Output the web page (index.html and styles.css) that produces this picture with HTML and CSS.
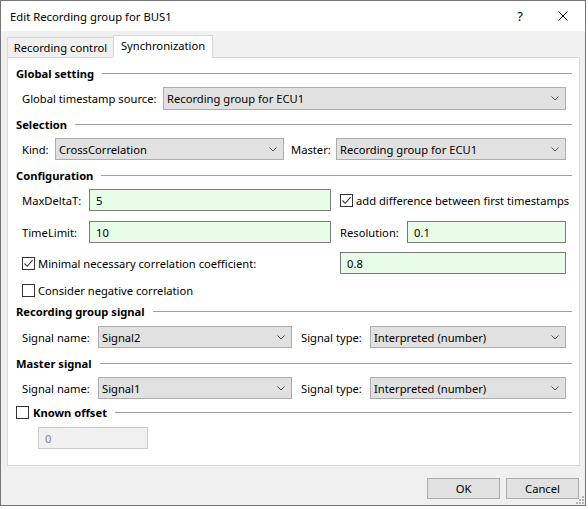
FILE: index.html
```html
<!DOCTYPE html>
<html>
<head>
<meta charset="utf-8">
<title>Edit Recording group for BUS1</title>
<link rel="stylesheet" href="styles.css">
</head>
<body>
<div class="window">
  <div class="titlebar">
    <span class="title">Edit Recording group for BUS1</span>
    <span class="help">?</span>
    <svg class="close" width="10" height="10" viewBox="0 0 10 10"><path d="M0.5 0.5 L9.5 9.5 M9.5 0.5 L0.5 9.5" stroke="#000" stroke-width="1" fill="none"/></svg>
  </div>
  <div class="client">
    <div class="tabs">
      <div class="tab">Recording control</div>
      <div class="tab active">Synchronization</div>
    </div>
    <div class="pane">
      <div class="hdr m7"><span class="hdr-text">Global setting</span><span class="rule"></span></div>
      <div class="row tall m6">
        <span class="lbl">Global timestamp source:</span>
        <div class="combo w-global"><span class="val">Recording group for ECU1</span><svg class="chev" width="8" height="5" viewBox="0 0 8 5"><path d="M0.5 0.5 L4 4 L7.5 0.5" stroke="#505050" fill="none"/></svg></div>
      </div>

      <div class="hdr m6"><span class="hdr-text">Selection</span><span class="rule"></span></div>
      <div class="row m6">
        <span class="lbl w-kind">Kind:</span>
        <div class="combo w-kindcombo"><span class="val">CrossCorrelation</span><svg class="chev" width="8" height="5" viewBox="0 0 8 5"><path d="M0.5 0.5 L4 4 L7.5 0.5" stroke="#505050" fill="none"/></svg></div>
        <span class="lbl w-master">Master:</span>
        <div class="combo grow"><span class="val">Recording group for ECU1</span><svg class="chev" width="8" height="5" viewBox="0 0 8 5"><path d="M0.5 0.5 L4 4 L7.5 0.5" stroke="#505050" fill="none"/></svg></div>
      </div>

      <div class="hdr m7"><span class="hdr-text">Configuration</span><span class="rule"></span></div>
      <div class="row m6">
        <span class="lbl w-cfg">MaxDeltaT:</span>
        <div class="edit w-cfgedit">5</div>
        <span class="cb checked gap9"><svg width="11" height="11" viewBox="0 0 11 11"><path d="M1.5 5.5 L4.2 8.3 L9.6 2.2" stroke="#333" stroke-width="1.1" fill="none"/></svg></span>
        <span class="cblbl">add difference between first timestamps</span>
      </div>
      <div class="row m10">
        <span class="lbl w-cfg">TimeLimit:</span>
        <div class="edit w-cfgedit">10</div>
        <span class="lbl w-res">Resolution:</span>
        <div class="edit grow">0.1</div>
      </div>
      <div class="row m9">
        <div class="leftpart">
          <span class="cb checked"><svg width="11" height="11" viewBox="0 0 11 11"><path d="M1.5 5.5 L4.2 8.3 L9.6 2.2" stroke="#333" stroke-width="1.1" fill="none"/></svg></span>
          <span class="cblbl">Minimal necessary correlation coefficient:</span>
        </div>
        <div class="edit grow">0.8</div>
      </div>
      <div class="row short m8">
        <span class="cb"></span>
        <span class="cblbl">Consider negative correlation</span>
      </div>

      <div class="hdr m5"><span class="hdr-text">Recording group signal</span><span class="rule"></span></div>
      <div class="row m7">
        <span class="lbl w-sname">Signal name:</span>
        <div class="combo w-scombo"><span class="val">Signal2</span><svg class="chev" width="8" height="5" viewBox="0 0 8 5"><path d="M0.5 0.5 L4 4 L7.5 0.5" stroke="#505050" fill="none"/></svg></div>
        <span class="lbl w-stype">Signal type:</span>
        <div class="combo grow"><span class="val">Interpreted (number)</span><svg class="chev" width="8" height="5" viewBox="0 0 8 5"><path d="M0.5 0.5 L4 4 L7.5 0.5" stroke="#505050" fill="none"/></svg></div>
      </div>

      <div class="hdr m7"><span class="hdr-text">Master signal</span><span class="rule"></span></div>
      <div class="row m6">
        <span class="lbl w-sname">Signal name:</span>
        <div class="combo w-scombo"><span class="val">Signal1</span><svg class="chev" width="8" height="5" viewBox="0 0 8 5"><path d="M0.5 0.5 L4 4 L7.5 0.5" stroke="#505050" fill="none"/></svg></div>
        <span class="lbl w-stype">Signal type:</span>
        <div class="combo grow"><span class="val">Interpreted (number)</span><svg class="chev" width="8" height="5" viewBox="0 0 8 5"><path d="M0.5 0.5 L4 4 L7.5 0.5" stroke="#505050" fill="none"/></svg></div>
      </div>

      <div class="hdr m5"><span class="cb hdr-cb"></span><span class="hdr-text">Known offset</span><span class="rule"></span></div>
      <div class="row m7 indent">
        <div class="edit disabled w-offset">0</div>
      </div>
    </div>
    <div class="buttons">
      <div class="btn">OK</div>
      <div class="btn">Cancel</div>
    </div>
  </div>
  <svg class="grip" width="10" height="8" viewBox="0 0 10 8">
    <rect x="8" y="0" width="2" height="2" fill="#b4b4b4"/>
    <rect x="5" y="3" width="2" height="2" fill="#b4b4b4"/>
    <rect x="8" y="3" width="2" height="2" fill="#b4b4b4"/>
    <rect x="2" y="6" width="2" height="2" fill="#b4b4b4"/>
    <rect x="5" y="6" width="2" height="2" fill="#b4b4b4"/>
    <rect x="8" y="6" width="2" height="2" fill="#b4b4b4"/>
  </svg>
</div>
</body>
</html>
```

FILE: styles.css
```css
* { box-sizing: border-box; }
html, body { margin: 0; padding: 0; background: #ffffff; }
body {
  width: 588px;
  height: 509px;
  overflow: hidden;
  font-family: "Noto Sans", "Open Sans", sans-serif;
  font-size: 11.2px;
  color: #000;
}
.window {
  position: relative;
  width: 586px;
  height: 506px;
  border: 1px solid #767676;
  background: #f0f0f0;
  display: flex;
  flex-direction: column;
}
.titlebar {
  flex: none;
  height: 30px;
  background: #ffffff;
  display: flex;
  align-items: center;
  padding-left: 9px;
}
.title { font-size: 11.3px; white-space: nowrap; }
.help {
  margin-left: auto;
  width: 8px;
  text-align: center;
  font-size: 13px;
}
.close { margin-left: 34px; margin-right: 17px; flex: none; }

.client {
  flex: 1;
  display: flex;
  flex-direction: column;
  padding: 4px 5px 0 6px;
}
.tabs {
  flex: none;
  height: 22px;
  display: flex;
  align-items: flex-end;
}
.tab {
  height: 20px;
  width: 106px;
  border: 1px solid #d9d9d9;
  border-right: none;
  border-bottom: none;
  background: #f0f0f0;
  text-align: center;
  line-height: 19px;
  white-space: nowrap;
}
.tab.active {
  position: relative;
  z-index: 1;
  height: 23px;
  width: 100px;
  margin-bottom: -1px;
  background: #ffffff;
  border-right: 1px solid #d9d9d9;
  line-height: 20px;
}
.pane {
  flex: none;
  height: 409px;
  background: #ffffff;
  border: 1px solid #d9d9d9;
  padding: 0 7px 0 8px;
}
.hdr {
  height: 16px;
  display: flex;
  align-items: center;
  font-weight: bold;
  white-space: nowrap;
}
.rule { flex: 1; height: 1px; background: #a0a0a0; margin-left: 8px; }
.hdr-cb { margin-right: 4px; }

.m5 { margin-top: 5px; }
.m6 { margin-top: 6px; }
.m7 { margin-top: 7px; }
.m8 { margin-top: 8px; }
.m9 { margin-top: 9px; }
.m10 { margin-top: 10px; }

.row {
  height: 22px;
  display: flex;
  align-items: center;
  padding: 0 6px;
  white-space: nowrap;
}
.row.tall { height: 23px; }
.row.short { height: 16px; }
.row.indent { padding-left: 22px; }

.lbl { flex: none; white-space: nowrap; }
.w-kind { width: 33px; }
.w-master { width: 45px; margin-left: 7px; }
.w-cfg { width: 67px; }
.w-res { width: 67px; margin-left: 9px; }
.w-sname { width: 76px; }
.w-stype { width: 69px; margin-left: 9px; }

.combo {
  height: 100%;
  border: 1px solid #adadad;
  background: #e1e1e1;
  display: flex;
  align-items: center;
  padding: 0 6px 0 3px;
  flex: none;
}
.combo .val { flex: 1; overflow: hidden; }
.chev { flex: none; }
.grow { flex: 1; }
.w-global { width: 403px; margin-left: auto; }
.w-kindcombo { width: 229px; }
.w-scombo { width: 194px; }

.edit {
  height: 100%;
  border: 1px solid #7a7a7a;
  background: #e7fde7;
  padding-left: 6px;
  display: flex;
  align-items: center;
  flex: none;
}
.edit.grow { flex: 1; }
.w-cfgedit { width: 242px; }
.edit.disabled {
  background: #f0f0f0;
  border-color: #cccccc;
  color: #838383;
}
.w-offset { width: 110px; }

.cb {
  flex: none;
  width: 13px;
  height: 13px;
  border: 1px solid #333333;
  background: #ffffff;
  display: flex;
  align-items: center;
  justify-content: center;
}
.gap9 { margin-left: 9px; }
.cblbl { margin-left: 3px; white-space: nowrap; }
.leftpart { width: 318px; flex: none; display: flex; align-items: center; }

.buttons {
  flex: none;
  display: flex;
  justify-content: flex-end;
  gap: 6px;
  margin-top: 12px;
  padding-right: 1px;
}
.btn {
  width: 73px;
  height: 21px;
  border: 1px solid #adadad;
  background: #e1e1e1;
  text-align: center;
  line-height: 19px;
}
.grip { position: absolute; right: 1px; bottom: 1px; }
```
